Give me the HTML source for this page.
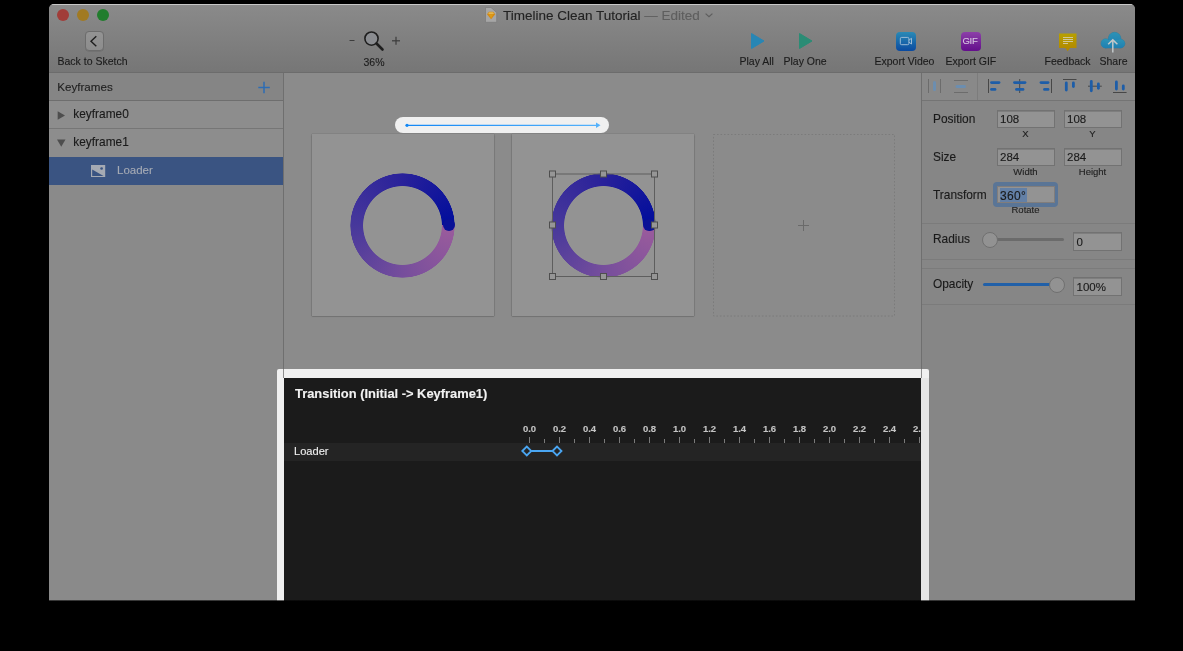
<!DOCTYPE html>
<html><head><meta charset="utf-8">
<style>
*{box-sizing:border-box;margin:0;padding:0}
html,body{width:1183px;height:651px;background:#000;overflow:hidden}
body{position:relative;will-change:transform;font-family:"Liberation Sans",sans-serif;color:#1f1f1f}
.a{position:absolute}
.t{position:absolute;white-space:nowrap;line-height:1;-webkit-text-stroke:0.12px currentColor}
svg{position:absolute;overflow:visible}
.lbl{font-size:10.5px;color:#1c1c1c}
.light{position:absolute;width:12px;height:12px;border-radius:50%}
.fld{position:absolute;background:#939393;border:1px solid #727272;box-shadow:inset 0 1px 0 #7e7e7e}
.ft{font-size:11.5px;color:#1a1a1a}
.lab{font-size:11.9px;color:#1a1a1a}
.ring{width:105px;height:105px;border-radius:50%;background:conic-gradient(from 90deg,#9b5c9c,#764e9c 25%,#47389b 50%,#29219a 75%,#000d9c);-webkit-mask:radial-gradient(circle,transparent 39px,#000 39.8px,#000 51.8px,transparent 52.5px);mask:radial-gradient(circle,transparent 39px,#000 39.8px,#000 51.8px,transparent 52.5px)}
.cap{width:12.4px;height:12.4px;border-radius:50%;background:#0a1196}
.sub{font-size:9.5px;color:#1f1f1f;text-align:center}
</style></head>
<body>
<!-- window base -->
<div class="a" style="left:49px;top:4px;width:1086px;height:596px;background:#8a8a8a;border-radius:5px 5px 0 0;overflow:hidden">
  <div class="a" style="left:0;top:0;width:1086px;height:69px;background:linear-gradient(#8a8a8a,#767676);border-top:1px solid #c8c8c8;border-bottom:1px solid #6c6c6c"></div>
</div>
<!-- traffic lights -->
<div class="light" style="left:57px;top:9px;background:#a13d39"></div>
<div class="light" style="left:77px;top:9px;background:#a17a22"></div>
<div class="light" style="left:97px;top:9px;background:#217d2d"></div>

<!-- TOOLBAR -->
<div class="a" style="left:84.5px;top:31px;width:19.5px;height:20px;border-radius:4px;background:linear-gradient(#939393,#8d8d8d);border:1px solid #6c6c6c;box-shadow:0 0.5px 0.5px rgba(0,0,0,.15)"></div>
<svg style="left:0;top:0" width="1" height="1"><polyline points="96.3,36.2 91,41.2 96.3,46.3" fill="none" stroke="#1e1e1e" stroke-width="1.4"/></svg>
<div class="t lbl" style="left:57.5px;top:56.3px">Back to Sketch</div>

<!-- title -->
<svg style="left:0;top:0" width="1" height="1">
  <path d="M485.5,7.5 H491 L496.7,12.5 V22.3 H485.5 Z" fill="#a6a6a6" stroke="#7c7c7c" stroke-width="0.8"/>
  <path d="M487,14.2 L489,11.8 H493.2 L495.2,14.2 L491.1,19.2 Z" fill="#d48a12"/>
  <path d="M489.2,12.3 H493 L494,14 H488.2 Z" fill="#e2b650"/>
  <path d="M489,14.2 H493.2 L491.1,18.6 Z" fill="#dc9a18"/>
</svg>
<div class="t" style="left:503px;top:8.5px;font-size:13.5px;color:#222">Timeline Clean Tutorial <span style="color:#5e5e5e">— Edited</span></div>
<svg style="left:0;top:0" width="1" height="1"><polyline points="705.6,13.6 709,16.8 712.4,13.6" fill="none" stroke="#5e5e5e" stroke-width="1.2"/></svg>

<!-- zoom -->
<svg style="left:0;top:0" width="1" height="1">
  <line x1="349.5" y1="40.5" x2="354.5" y2="40.5" stroke="#3c3c3c" stroke-width="1"/>
  <circle cx="371.5" cy="38.6" r="6.6" fill="#8a8c90" stroke="#1e1e1e" stroke-width="1.6"/>
  <line x1="376.5" y1="43.5" x2="382.5" y2="49.5" stroke="#1e1e1e" stroke-width="2.6" stroke-linecap="round"/>
  <line x1="392" y1="40.8" x2="400" y2="40.8" stroke="#3c3c3c" stroke-width="1.2"/>
  <line x1="396" y1="36.8" x2="396" y2="44.8" stroke="#3c3c3c" stroke-width="1.2"/>
</svg>
<div class="t" style="left:363.5px;top:56.6px;font-size:10.5px;color:#1c1c1c">36%</div>

<!-- play -->
<svg style="left:0;top:0" width="1" height="1">
  <path d="M751.5,33.5 L764,41 L751.5,48.5 Z" fill="#2886b4" stroke="#2886b4" stroke-width="1" stroke-linejoin="round"/>
  <path d="M799.5,33.5 L812,41 L799.5,48.5 Z" fill="#2b8c75" stroke="#2b8c75" stroke-width="1" stroke-linejoin="round"/>
</svg>
<div class="t lbl" style="left:739.5px;top:56.3px">Play All</div>
<div class="t lbl" style="left:783.5px;top:56.3px">Play One</div>

<!-- export -->
<div class="a" style="left:896.3px;top:31.5px;width:19.3px;height:19.3px;border-radius:4px;background:linear-gradient(#2a8ab6,#0a4aa0)"></div>
<svg style="left:0;top:0" width="1" height="1">
  <rect x="900.3" y="37.4" width="8.6" height="7.3" rx="1.3" fill="none" stroke="#a9c3d9" stroke-width="0.9"/>
  <path d="M908.9,40.2 L911.5,38.3 V44 L908.9,42.2" fill="none" stroke="#a9c3d9" stroke-width="0.9"/>
</svg>
<div class="a" style="left:961.3px;top:31.5px;width:19.3px;height:19.3px;border-radius:4px;background:linear-gradient(#8c40a8,#640e8c)"></div>
<div class="t" style="left:962.5px;top:36px;font-size:9.5px;color:#d7c6e0;letter-spacing:-0.3px">GIF</div>
<div class="t lbl" style="left:874.5px;top:56.3px">Export Video</div>
<div class="t lbl" style="left:945.5px;top:56.3px">Export GIF</div>

<!-- feedback / share -->
<svg style="left:0;top:0" width="1" height="1">
  <defs><linearGradient id="fy" x1="0" y1="0" x2="0" y2="1"><stop offset="0" stop-color="#b8a000"/><stop offset="1" stop-color="#b08600"/></linearGradient>
  <linearGradient id="cl" x1="0" y1="0" x2="0" y2="1"><stop offset="0" stop-color="#2c92b6"/><stop offset="1" stop-color="#1f80b2"/></linearGradient></defs>
  <path d="M1059,33.5 H1076.5 V48 H1070 L1067.7,51.3 L1065.4,48 H1059 Z" fill="url(#fy)"/>
  <g stroke="#cfc79a" stroke-width="1"><line x1="1063" y1="37.5" x2="1073" y2="37.5"/><line x1="1063" y1="39.5" x2="1073" y2="39.5"/><line x1="1063" y1="41.5" x2="1073" y2="41.5"/><line x1="1063" y1="43.5" x2="1068" y2="43.5"/></g>
  <g fill="url(#cl)" stroke="#237a9c" stroke-width="0.5"><circle cx="1114.6" cy="38.6" r="6.3"/><circle cx="1105.6" cy="43.4" r="4.6"/><circle cx="1120.5" cy="43.6" r="4.4"/><rect x="1105.6" y="42" width="14.9" height="6"/></g><g fill="url(#cl)"><circle cx="1114.6" cy="38.6" r="6.05"/><circle cx="1105.6" cy="43.4" r="4.35"/><circle cx="1120.5" cy="43.6" r="4.15"/><rect x="1105.6" y="40" width="14.9" height="7.75"/></g>
  <g stroke="#c2c8ca" stroke-width="1.5" fill="none"><line x1="1112.8" y1="40" x2="1112.8" y2="52.5"/><polyline points="1108.2,44.3 1112.8,39.9 1117.4,44.3"/></g>
</svg>
<div class="t lbl" style="left:1044.5px;top:56.3px">Feedback</div>
<div class="t lbl" style="left:1099.5px;top:56.3px">Share</div>

<!-- LEFT PANEL -->
<div class="a" style="left:49px;top:73px;width:235px;height:527px;background:#8a8a8a;border-right:1px solid #6f6f6f"></div>
<div class="a" style="left:49px;top:73px;width:234px;height:28px;background:#858585;border-bottom:1px solid #6e6e6e"></div>
<div class="t lab" style="left:57.3px;top:80.9px;color:#1f1f1f;font-size:11.6px">Keyframes</div>
<svg style="left:0;top:0" width="1" height="1"><g stroke="#2d6db5" stroke-width="1.5"><line x1="258.3" y1="87.5" x2="269.8" y2="87.5"/><line x1="264" y1="81.8" x2="264" y2="93.3"/></g></svg>
<div class="a" style="left:49px;top:101px;width:234px;height:28px;background:#8d8d8d;border-bottom:1px solid #767676"></div>
<div class="a" style="left:49px;top:129px;width:234px;height:28px;background:#8d8d8d"></div>
<svg style="left:0;top:0" width="1" height="1">
  <path d="M57.7,111.3 L65,115.5 L57.7,119.7 Z" fill="#4e4e4e"/>
  <path d="M57,139.5 L65.5,139.5 L61.25,146.8 Z" fill="#4e4e4e"/>
</svg>
<div class="t lab" style="left:73.3px;top:109.1px">keyframe0</div>
<div class="t lab" style="left:73.3px;top:136.9px">keyframe1</div>
<div class="a" style="left:49px;top:157px;width:234px;height:28px;background:#3a5482"></div>
<svg style="left:0;top:0" width="1" height="1">
  <rect x="91" y="165" width="14.2" height="12" fill="#a5aab3"/>
  <path d="M92.2,169.4 L103.6,176 H92.2 Z" fill="#3a5482"/>
  <circle cx="101.6" cy="168.5" r="1.35" fill="#3a5482"/>
</svg>
<div class="t ft" style="left:117px;top:165px;color:#a5aab4">Loader</div>

<!-- CANVAS -->
<div class="a" style="left:284px;top:73px;width:637px;height:527px;background:#8b8b8b"></div>
<div class="a" style="left:395px;top:117px;width:214px;height:16px;border-radius:8px;background:#f0f0f0"></div>
<svg style="left:0;top:0" width="1" height="1">
  <defs><linearGradient id="arr" x1="406" y1="0" x2="600" y2="0" gradientUnits="userSpaceOnUse"><stop offset="0" stop-color="#1287f5"/><stop offset="1" stop-color="#55b2fb"/></linearGradient></defs>
  <line x1="406.5" y1="125.3" x2="597" y2="125.3" stroke="url(#arr)" stroke-width="1.3"/>
  <circle cx="407" cy="125.3" r="1.6" fill="#1287f5"/>
  <path d="M596,122.5 L600.5,125.3 L596,128.1 Z" fill="#55b2fb"/>
</svg>
<div class="a" style="left:312px;top:134px;width:182px;height:182px;background:#939393;box-shadow:0 0 1px rgba(0,0,0,.35),0 1.2px 1.5px rgba(0,0,0,.3)"></div>
<div class="a" style="left:512px;top:134px;width:182px;height:182px;background:#939393;box-shadow:0 0 1px rgba(0,0,0,.35),0 1.2px 1.5px rgba(0,0,0,.3)"></div>
<svg style="left:0;top:0" width="1" height="1"><rect x="713.5" y="134.5" width="181" height="181.5" fill="none" stroke="#7b7b7b" stroke-width="1" stroke-dasharray="1.6 1.9"/></svg>
<svg style="left:0;top:0" width="1" height="1"><g stroke="#6a6a6a" stroke-width="1"><line x1="798" y1="225.5" x2="809" y2="225.5"/><line x1="803.5" y1="220" x2="803.5" y2="231"/></g></svg>
<!-- rings -->
<div class="a ring" style="left:350.2px;top:172.7px"></div>
<div class="a cap" style="left:442.7px;top:219px"></div>
<div class="a ring" style="left:551px;top:172.5px"></div>
<div class="a cap" style="left:643.3px;top:219px"></div>
<svg style="left:0;top:0" width="1" height="1">
  <rect x="552.5" y="174" width="102" height="102.5" fill="none" stroke="#5e5e5e" stroke-width="1"/>
  <g fill="#969696" stroke="#4e4e4e" stroke-width="1">
    <rect x="549.5" y="171" width="6" height="6"/><rect x="600.5" y="171" width="6" height="6"/><rect x="651.5" y="171" width="6" height="6"/>
    <rect x="549.5" y="222" width="6" height="6"/><rect x="651.5" y="222" width="6" height="6"/>
    <rect x="549.5" y="273.5" width="6" height="6"/><rect x="600.5" y="273.5" width="6" height="6"/><rect x="651.5" y="273.5" width="6" height="6"/>
  </g>
</svg>

<!-- RIGHT PANEL -->
<div class="a" style="left:921px;top:73px;width:214px;height:527px;background:#868686;border-left:1px solid #6f6f6f"></div>
<div class="a" style="left:922px;top:73px;width:213px;height:28px;background:#898989;border-bottom:1px solid #747474"></div>
<div class="a" style="left:977px;top:73px;width:1px;height:27px;background:#7c7c7c"></div>
<svg style="left:0;top:0" width="1" height="1">
  <g stroke="#6c6c6c" stroke-width="1"><line x1="928.5" y1="79" x2="928.5" y2="93"/><line x1="940.5" y1="79" x2="940.5" y2="93"/>
  <line x1="954" y1="80.5" x2="968" y2="80.5"/><line x1="954" y1="92.5" x2="968" y2="92.5"/></g>
  <g stroke="#6c8eb0" stroke-width="3" stroke-linecap="round"><line x1="934.5" y1="82.5" x2="934.5" y2="89.5"/><line x1="957" y1="86.5" x2="964.5" y2="86.5"/></g>
  <g stroke="#474747" stroke-width="1">
    <line x1="988.5" y1="79" x2="988.5" y2="93"/>
    <line x1="1019.7" y1="79" x2="1019.7" y2="93"/>
    <line x1="1051.5" y1="79" x2="1051.5" y2="93"/>
    <line x1="1063" y1="79.5" x2="1076.5" y2="79.5"/>
    <line x1="1088" y1="86.2" x2="1101.8" y2="86.2"/>
    <line x1="1113" y1="92.5" x2="1126.6" y2="92.5"/>
  </g>
  <g stroke="#1d5da8" stroke-width="2.8" stroke-linecap="round">
    <line x1="991.5" y1="82.6" x2="999" y2="82.6"/><line x1="991.5" y1="89.4" x2="995" y2="89.4"/>
    <line x1="1014.5" y1="82.6" x2="1025" y2="82.6"/><line x1="1016.5" y1="89.4" x2="1023" y2="89.4"/>
    <line x1="1041" y1="82.6" x2="1048" y2="82.6"/><line x1="1044.5" y1="89.4" x2="1048" y2="89.4"/>
    <line x1="1066.3" y1="83" x2="1066.3" y2="90"/><line x1="1073.4" y1="83" x2="1073.4" y2="86.5"/>
    <line x1="1091.3" y1="81.5" x2="1091.3" y2="90.8"/><line x1="1098.4" y1="84" x2="1098.4" y2="88.3"/>
    <line x1="1116.4" y1="82" x2="1116.4" y2="89"/><line x1="1123.3" y1="86" x2="1123.3" y2="89"/>
  </g>
</svg>
<div class="t lab" style="left:933px;top:114px">Position</div>
<div class="fld" style="left:997px;top:110px;width:58px;height:18px"></div>
<div class="fld" style="left:1064px;top:110px;width:58px;height:18px"></div>
<div class="t ft" style="left:1000px;top:113.9px">108</div>
<div class="t ft" style="left:1067px;top:113.9px">108</div>
<div class="t sub" style="left:997px;top:128.5px;width:57px">X</div>
<div class="t sub" style="left:1064px;top:128.5px;width:57px">Y</div>
<div class="t lab" style="left:933px;top:151.8px">Size</div>
<div class="fld" style="left:997px;top:148px;width:58px;height:18px"></div>
<div class="fld" style="left:1064px;top:148px;width:58px;height:18px"></div>
<div class="t ft" style="left:1000px;top:151.9px">284</div>
<div class="t ft" style="left:1067px;top:151.9px">284</div>
<div class="t sub" style="left:997px;top:166.5px;width:57px">Width</div>
<div class="t sub" style="left:1064px;top:166.5px;width:57px">Height</div>
<div class="t lab" style="left:933px;top:189.8px">Transform</div>
<div class="a" style="left:993.3px;top:182px;width:64.7px;height:24.6px;border-radius:4px;background:#5a7596"></div>
<div class="fld" style="left:997px;top:185.6px;width:57.5px;height:17.8px;border-color:#817d7b;box-shadow:none"></div>
<div class="a" style="left:1000px;top:188px;width:27px;height:14px;background:#6380a6"></div>
<div class="t ft" style="left:1000px;top:189.8px;font-size:12px;letter-spacing:0.3px">360°</div>
<div class="t sub" style="left:997px;top:205px;width:57px">Rotate</div>
<div class="a" style="left:922px;top:223px;width:213px;height:1px;background:#7b7b7b"></div>
<div class="a" style="left:922px;top:259px;width:213px;height:1px;background:#7b7b7b"></div>
<div class="a" style="left:922px;top:268px;width:213px;height:1px;background:#7b7b7b"></div>
<div class="a" style="left:922px;top:304px;width:213px;height:1px;background:#7b7b7b"></div>
<div class="t lab" style="left:933px;top:234px">Radius</div>
<div class="a" style="left:990px;top:238px;width:74px;height:3px;border-radius:2px;background:#6b6b6b"></div>
<div class="a" style="left:982px;top:231.5px;width:16px;height:16px;border-radius:50%;background:#929292;border:1px solid #707070"></div>
<div class="fld" style="left:1073px;top:232px;width:49px;height:18.5px"></div>
<div class="t ft" style="left:1076.5px;top:237px">0</div>
<div class="t lab" style="left:933px;top:278.5px">Opacity</div>
<div class="a" style="left:983px;top:283px;width:74px;height:3px;border-radius:2px;background:#2160a8"></div>
<div class="a" style="left:1048.5px;top:276.5px;width:16px;height:16px;border-radius:50%;background:#929292;border:1px solid #707070"></div>
<div class="fld" style="left:1073px;top:277px;width:49px;height:18.5px"></div>
<div class="t ft" style="left:1076.5px;top:282px">100%</div>

<!-- TRANSITION FRAME -->
<div class="a" style="left:277px;top:369px;width:652px;height:231px;background:#f0f0f0;border-radius:2px 2px 0 0"></div>
<div class="a" style="left:921px;top:378px;width:8px;height:222px;background:#e6e6e6"></div>
<div class="a" style="left:283px;top:369px;width:1px;height:9px;background:#8e8e8e"></div>
<div class="a" style="left:921px;top:369px;width:1px;height:9px;background:#8e8e8e"></div>
<div class="a" style="left:284px;top:378px;width:637px;height:222px;background:#1b1b1b;overflow:hidden">
  <div class="t" style="left:11px;top:9.8px;font-size:12.9px;font-weight:700;color:#f2f2f2">Transition (Initial -&gt; Keyframe1)</div>
  <div class="a" style="left:0;top:65px;width:637px;height:18px;background:#242424"></div>
  <div class="t" style="left:10px;top:67.6px;font-size:11.1px;color:#eeeeee">Loader</div>
  <svg style="left:0;top:0" width="637" height="222"><g stroke="#7a7a7a" stroke-width="1"><line x1="245.5" y1="59" x2="245.5" y2="65"/><line x1="260.5" y1="61" x2="260.5" y2="65"/><line x1="275.5" y1="59" x2="275.5" y2="65"/><line x1="290.5" y1="61" x2="290.5" y2="65"/><line x1="305.5" y1="59" x2="305.5" y2="65"/><line x1="320.5" y1="61" x2="320.5" y2="65"/><line x1="335.5" y1="59" x2="335.5" y2="65"/><line x1="350.5" y1="61" x2="350.5" y2="65"/><line x1="365.5" y1="59" x2="365.5" y2="65"/><line x1="380.5" y1="61" x2="380.5" y2="65"/><line x1="395.5" y1="59" x2="395.5" y2="65"/><line x1="410.5" y1="61" x2="410.5" y2="65"/><line x1="425.5" y1="59" x2="425.5" y2="65"/><line x1="440.5" y1="61" x2="440.5" y2="65"/><line x1="455.5" y1="59" x2="455.5" y2="65"/><line x1="470.5" y1="61" x2="470.5" y2="65"/><line x1="485.5" y1="59" x2="485.5" y2="65"/><line x1="500.5" y1="61" x2="500.5" y2="65"/><line x1="515.5" y1="59" x2="515.5" y2="65"/><line x1="530.5" y1="61" x2="530.5" y2="65"/><line x1="545.5" y1="59" x2="545.5" y2="65"/><line x1="560.5" y1="61" x2="560.5" y2="65"/><line x1="575.5" y1="59" x2="575.5" y2="65"/><line x1="590.5" y1="61" x2="590.5" y2="65"/><line x1="605.5" y1="59" x2="605.5" y2="65"/><line x1="620.5" y1="61" x2="620.5" y2="65"/><line x1="635.5" y1="59" x2="635.5" y2="65"/></g></svg><div class="t" style="left:230.5px;top:45.5px;width:30px;text-align:center;font-size:9.5px;font-weight:700;color:#c4c4c4">0.0</div><div class="t" style="left:260.5px;top:45.5px;width:30px;text-align:center;font-size:9.5px;font-weight:700;color:#c4c4c4">0.2</div><div class="t" style="left:290.5px;top:45.5px;width:30px;text-align:center;font-size:9.5px;font-weight:700;color:#c4c4c4">0.4</div><div class="t" style="left:320.5px;top:45.5px;width:30px;text-align:center;font-size:9.5px;font-weight:700;color:#c4c4c4">0.6</div><div class="t" style="left:350.5px;top:45.5px;width:30px;text-align:center;font-size:9.5px;font-weight:700;color:#c4c4c4">0.8</div><div class="t" style="left:380.5px;top:45.5px;width:30px;text-align:center;font-size:9.5px;font-weight:700;color:#c4c4c4">1.0</div><div class="t" style="left:410.5px;top:45.5px;width:30px;text-align:center;font-size:9.5px;font-weight:700;color:#c4c4c4">1.2</div><div class="t" style="left:440.5px;top:45.5px;width:30px;text-align:center;font-size:9.5px;font-weight:700;color:#c4c4c4">1.4</div><div class="t" style="left:470.5px;top:45.5px;width:30px;text-align:center;font-size:9.5px;font-weight:700;color:#c4c4c4">1.6</div><div class="t" style="left:500.5px;top:45.5px;width:30px;text-align:center;font-size:9.5px;font-weight:700;color:#c4c4c4">1.8</div><div class="t" style="left:530.5px;top:45.5px;width:30px;text-align:center;font-size:9.5px;font-weight:700;color:#c4c4c4">2.0</div><div class="t" style="left:560.5px;top:45.5px;width:30px;text-align:center;font-size:9.5px;font-weight:700;color:#c4c4c4">2.2</div><div class="t" style="left:590.5px;top:45.5px;width:30px;text-align:center;font-size:9.5px;font-weight:700;color:#c4c4c4">2.4</div><div class="t" style="left:620.5px;top:45.5px;width:30px;text-align:center;font-size:9.5px;font-weight:700;color:#c4c4c4">2.6</div>
  <svg style="left:0;top:0" width="637" height="222">
    <line x1="243" y1="73" x2="273" y2="73" stroke="#4aa6f2" stroke-width="2"/>
    <path d="M238.3,73 L242.8,68.5 L247.3,73 L242.8,77.5 Z" fill="#252525" stroke="#4aa6f2" stroke-width="1.8"/>
    <path d="M268.5,73 L273,68.5 L277.5,73 L273,77.5 Z" fill="#252525" stroke="#4aa6f2" stroke-width="1.8"/>
  </svg>
</div>

<!-- bottom antialiased row -->
<div class="a" style="left:49px;top:600px;width:1086px;height:1px;opacity:.4;background:linear-gradient(90deg,#8a8a8a 0,#8a8a8a 228px,#f0f0f0 228px,#f0f0f0 235px,#1b1b1b 235px,#1b1b1b 872px,#e6e6e6 872px,#e6e6e6 880px,#868686 880px)"></div>
</body></html>
